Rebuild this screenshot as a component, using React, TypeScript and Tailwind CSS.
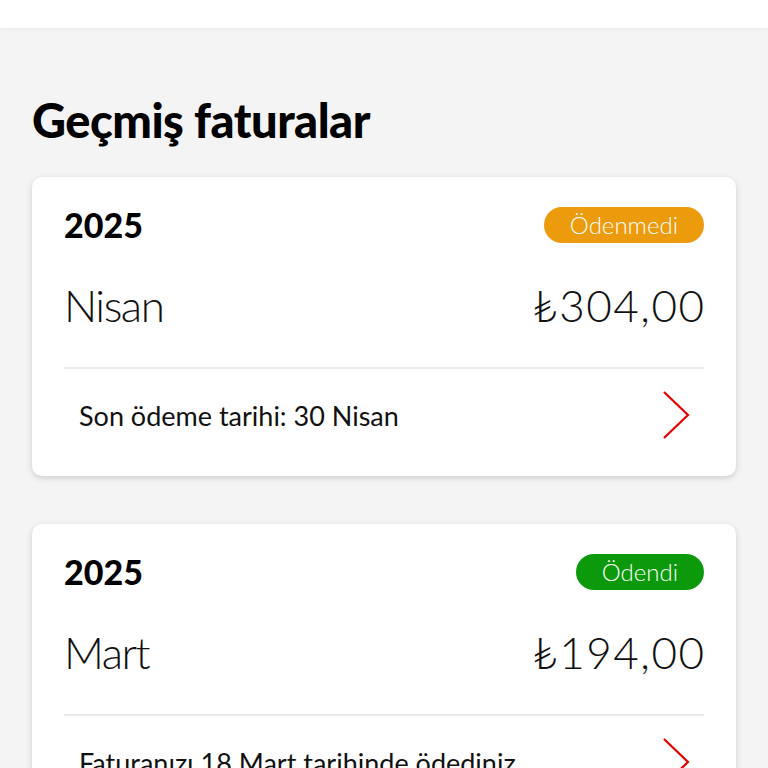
import type { ReactNode } from "react";

const font = { fontFamily: "Lato, 'Open Sans', sans-serif" };

type Bill = {
  year: string;
  month: string;
  amount: string;
  status: string;
  paid: boolean;
  note: string;
};

const bills: Bill[] = [
  { year: "2025", month: "Nisan", amount: "₺304,00", status: "Ödenmedi", paid: false, note: "Son ödeme tarihi: 30 Nisan" },
  { year: "2025", month: "Mart", amount: "₺194,00", status: "Ödendi", paid: true, note: "Faturanızı 18 Mart tarihinde ödediniz" },
];

const Chevron = () => (
  <svg width="28" height="48" viewBox="0 0 28 48" fill="none" aria-hidden>
    <polyline points="2,1 26,24 2,47" stroke="#e60000" strokeWidth="2.2" strokeLinejoin="miter" />
  </svg>
);

const Badge = ({ paid, children }: { paid: boolean; children: ReactNode }) => (
  <span
    className={`inline-flex h-[36px] items-center rounded-full px-[26px] text-[24px] font-light leading-none text-white ${
      paid ? "bg-[#0c9a0c]" : "bg-[#eb9b0c]"
    }`}
  >
    {children}
  </span>
);

const BillCard = ({ bill }: { bill: Bill }) => (
  <div className="rounded-[10px] bg-white px-[32px] pt-[30px] pb-[15px] shadow-[0_2px_6px_rgba(0,0,0,0.16)]">
    <div className="flex h-[36px] items-center justify-between">
      <span className="text-[34px] font-black leading-none text-black">{bill.year}</span>
      <Badge paid={bill.paid}>{bill.status}</Badge>
    </div>
    <div className="mt-[34px] flex h-[56px] items-center justify-between text-[44px] font-light leading-none text-[#111]">
      <span className="tracking-[-1.5px]">{bill.month}</span>
      <span className="tracking-[1.5px] -mr-[1.5px]">{bill.amount}</span>
    </div>
    <div className="mt-[34px] h-[2px] bg-[#ebebeb]" />
    <div className="flex h-[92px] items-center justify-between pl-[15px] pr-[14px]">
      <span className="text-[27px] leading-none text-[#111]">{bill.note}</span>
      <Chevron />
    </div>
  </div>
);

export default function App() {
  return (
    <div className="min-h-screen bg-[#f4f4f4]" style={font}>
      <div className="h-[28px] bg-white shadow-[0_1px_3px_rgba(0,0,0,0.05)]" />
      <div className="px-[32px] pb-[40px]">
        <h1 className="mt-[64px] text-[47px] font-black leading-[56px] tracking-[-0.5px] text-black">
          Geçmiş faturalar
        </h1>
        <div className="mt-[29px] flex flex-col gap-[48px]">
          {bills.map((b) => (
            <BillCard key={b.month} bill={b} />
          ))}
        </div>
      </div>
    </div>
  );
}
